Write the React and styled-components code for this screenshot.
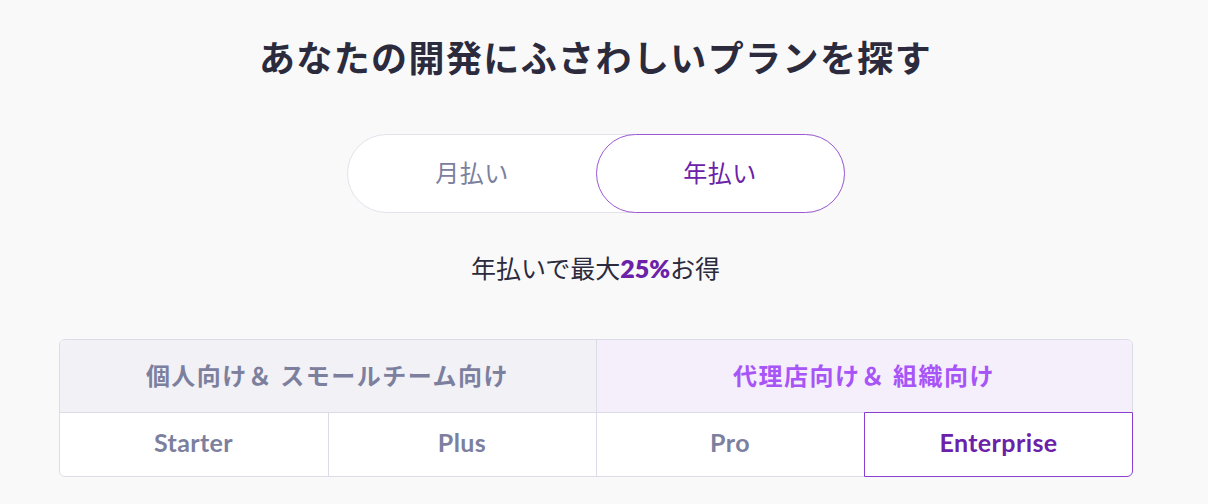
import React, {useState} from 'react';
import styled, {createGlobalStyle} from 'styled-components';

const GlobalStyle = createGlobalStyle`
  html, body {
    margin: 0;
    padding: 0;
    background: #f9f9fa;
  }
  body {
    font-family: 'Lato', 'Noto Sans CJK JP', sans-serif;
  }
`;

const Page = styled.div`
  width: 1191px;
  display: flex;
  flex-direction: column;
  align-items: center;
  padding-top: 30px;
`;

const Title = styled.h2`
  margin: 0;
  font-family: 'Noto Sans CJK JP', sans-serif;
  font-size: 36px;
  line-height: 52px;
  font-weight: 700;
  color: #2b2b3d;
  letter-spacing: 1.4px;
`;

const Toggle = styled.div`
  margin-top: 52px;
  width: 498px;
  height: 79px;
  box-sizing: border-box;
  border: 1px solid #e3e2ec;
  border-radius: 40px;
  background: #fff;
  display: flex;
`;

const ToggleButton = styled.button`
  flex: 1;
  border: 1px solid ${p => (p.$active ? '#9a58d3' : 'transparent')};
  border-radius: 40px;
  margin: ${p => (p.$active ? '-1px' : '0')};
  padding: 0 0 4px;
  background: ${p => (p.$active ? '#fff' : 'transparent')};
  font-family: 'Noto Sans CJK JP', sans-serif;
  font-size: 24px;
  letter-spacing: 0.5px;
  color: ${p => (p.$active ? '#6b21a8' : '#7c809e')};
  cursor: pointer;
`;

const Saving = styled.p`
  margin: 37px 0 0;
  font-family: 'Noto Sans CJK JP', sans-serif;
  font-size: 25px;
  line-height: 34px;
  color: #2b2b3d;
  strong {
    font-family: 'Lato', sans-serif;
    font-weight: 800;
    color: #6b21a8;
  }
`;

const Tabs = styled.div`
  margin-top: 54px;
  width: 1074px;
  box-sizing: border-box;
  border: 1px solid #dcdbe8;
  border-radius: 6px;
  background: #fff;
  display: grid;
  grid-template-columns: repeat(4, 1fr);
`;

const Group = styled.div`
  grid-column: span 2;
  height: 73px;
  padding-bottom: 4px;
  box-sizing: border-box;
  display: flex;
  align-items: center;
  justify-content: center;
  background: ${p => (p.$active ? '#f5eefb' : '#f2f1f5')};
  border-bottom: 1px solid #dcdbe8;
  border-left: ${p => (p.$first ? 'none' : '1px solid #dcdbe8')};
  border-radius: ${p => (p.$first ? '6px 0 0 0' : '0 6px 0 0')};
  font-family: 'Noto Sans CJK JP', sans-serif;
  font-size: 24px;
  font-weight: 700;
  letter-spacing: 1.5px;
  color: ${p => (p.$active ? '#a855f7' : '#7c809e')};
`;

const Plan = styled.button`
  margin: ${p => (p.$active ? '-1px -1px -1px 0' : '0')};
  height: ${p => (p.$active ? '65px' : '63px')};
  padding: 0 0 6px;
  border: none;
  border-left: ${p => (p.$first ? 'none' : '1px solid #dcdbe8')};
  outline: ${p => (p.$active ? '1px solid #8b3fd1' : 'none')};
  outline-offset: -1px;
  border-radius: ${p => (p.$last ? '0 0 6px 0' : p.$first ? '0 0 0 6px' : '0')};
  background: #fff;
  font-family: 'Lato', 'Noto Sans', sans-serif;
  font-size: 25px;
  font-weight: 700;
  letter-spacing: 0.4px;
  color: ${p => (p.$active ? '#6b21a8' : '#7c809e')};
  cursor: pointer;
`;

const plans = ['Starter', 'Plus', 'Pro', 'Enterprise'];

const App = () => {
  const [billing, setBilling] = useState('year');
  const [plan, setPlan] = useState('Enterprise');

  return (
    <>
      <GlobalStyle />
      <Page>
        <Title>あなたの開発にふさわしいプランを探す</Title>
        <Toggle>
          <ToggleButton $active={billing === 'month'} onClick={() => setBilling('month')}>
            月払い
          </ToggleButton>
          <ToggleButton $active={billing === 'year'} onClick={() => setBilling('year')}>
            年払い
          </ToggleButton>
        </Toggle>
        <Saving>
          年払いで最大<strong>25%</strong>お得
        </Saving>
        <Tabs>
          <Group $first>個人向け＆ スモールチーム向け</Group>
          <Group $active>代理店向け＆ 組織向け</Group>
          {plans.map((name, i) => (
            <Plan
              key={name}
              $first={i === 0}
              $last={i === plans.length - 1}
              $active={plan === name}
              onClick={() => setPlan(name)}
            >
              {name}
            </Plan>
          ))}
        </Tabs>
      </Page>
    </>
  );
};

export default App;
